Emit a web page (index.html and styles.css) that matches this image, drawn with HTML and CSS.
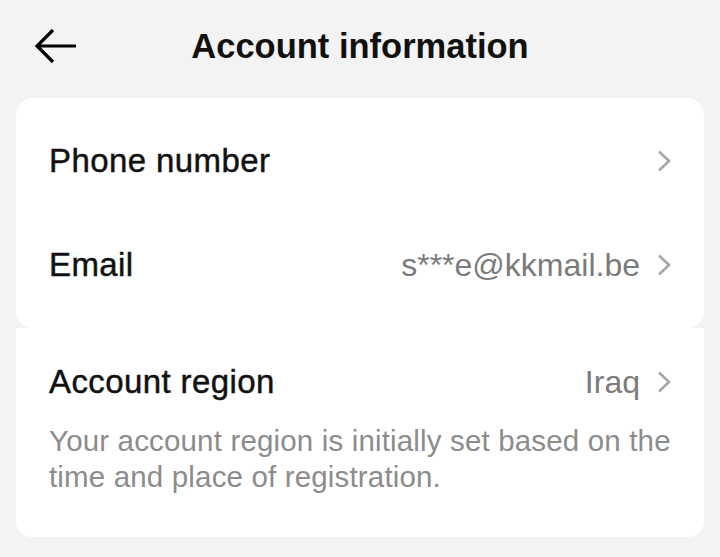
FILE: index.html
```html
<!DOCTYPE html>
<html lang="en">
<head>
<meta charset="utf-8">
<title>Account information</title>
<link rel="stylesheet" href="styles.css">
</head>
<body>
<div class="screen">
  <header class="topbar">
    <button class="back" aria-label="Back">
      <svg width="44" height="36" viewBox="0 0 44 36"><path d="M42 17H4M19 1L3 17l16 16" fill="none" stroke="#000" stroke-width="3.2" stroke-linecap="butt" stroke-linejoin="miter"/></svg>
    </button>
    <h1 class="title">Account information</h1>
  </header>

  <section class="card card-top">
    <div class="row">
      <span class="label">Phone number</span>
      <span class="value">
        <svg class="chev" width="14" height="22" viewBox="0 0 14 22"><path d="M2 1.5l10 9.5-10 9.5" fill="none" stroke="#a6a6a6" stroke-width="2.6"/></svg>
      </span>
    </div>
    <div class="row">
      <span class="label">Email</span>
      <span class="value"><span class="vtext">s***e@kkmail.be</span>
        <svg class="chev" width="14" height="22" viewBox="0 0 14 22"><path d="M2 1.5l10 9.5-10 9.5" fill="none" stroke="#a6a6a6" stroke-width="2.6"/></svg>
      </span>
    </div>
  </section>

  <section class="card card-bottom">
    <div class="row row-region">
      <span class="label">Account region</span>
      <span class="value"><span class="vtext">Iraq</span>
        <svg class="chev" width="14" height="22" viewBox="0 0 14 22"><path d="M2 1.5l10 9.5-10 9.5" fill="none" stroke="#a6a6a6" stroke-width="2.6"/></svg>
      </span>
    </div>
    <p class="desc">Your account region is initially set based on the time and place of registration.</p>
  </section>
</div>
</body>
</html>
```

FILE: styles.css
```css
* { box-sizing: border-box; }
html, body {
  margin: 0;
  padding: 0;
  background: #f3f3f3;
}
body {
  font-family: "Liberation Sans", Arial, sans-serif;
  color: #000;
}
.screen {
  width: 720px;
  height: 557px;
  padding: 0 16px;
  overflow: hidden;
}
.topbar {
  position: relative;
  height: 92px;
  display: flex;
  align-items: center;
  justify-content: center;
}
.back {
  position: absolute;
  left: 18px;
  top: 29px;
  margin: 0;
  padding: 0;
  border: 0;
  background: none;
  display: flex;
}
.title {
  margin: 0;
  font-size: 34.5px;
  font-weight: 700;
  color: #111;
  line-height: 1;
}
.card {
  background: #fff;
  margin-top: 6px;
  padding: 0 33px;
}
.card-top {
  border-radius: 16px;
  padding-top: 11px;
  padding-bottom: 11px;
}
.card-bottom {
  margin-top: 0;
  border-radius: 0 0 16px 16px;
  padding-top: 13px;
  padding-bottom: 42px;
}
.row {
  display: flex;
  align-items: center;
  justify-content: space-between;
  height: 104px;
}
.row-region {
  height: 82px;
}
.label {
  font-size: 33px;
  letter-spacing: 0.4px;
  color: #111;
  -webkit-text-stroke: 0.45px #111;
}
.value {
  display: flex;
  align-items: center;
  gap: 17px;
  font-size: 32px;
  color: #7b7b7b;
}
.chev { display: block; }
.desc {
  margin: 0 -12px 0 0;
  font-size: 29.5px;
  letter-spacing: 0.16px;
  line-height: 36px;
  color: #8c8c8c;
}
```
